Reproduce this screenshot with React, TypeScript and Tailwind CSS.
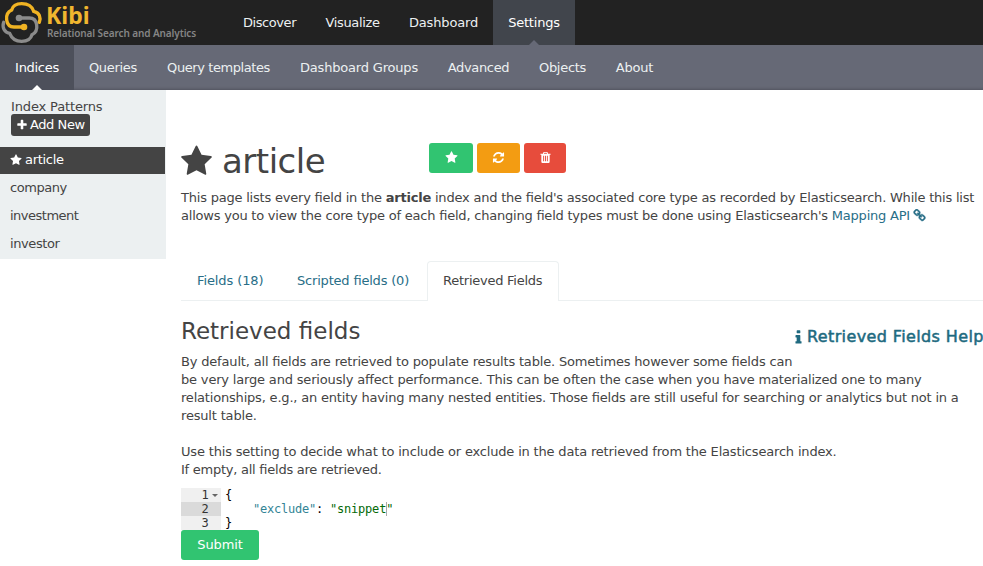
import type { ReactNode } from "react";

const icons = {
  star: "M1728 647q0 22-26 48l-363 354 86 500q1 7 1 20 0 21-10.5 35.5t-30.5 14.5q-19 0-40-12l-449-236-449 236q-22 12-40 12-21 0-31.5-14.5t-10.5-35.5q0-6 2-20l86-500-364-354q-25-27-25-48 0-37 56-46l502-73 225-455q19-41 49-41t49 41l225 455 502 73q56 9 56 46z",
  refresh:
    "M1639 1056q0 5-1 7-64 268-268 434.5t-478 166.5q-146 0-282.5-55t-243.5-157l-129 129q-19 19-45 19t-45-19-19-45v-448q0-26 19-45t45-19h448q26 0 45 19t19 45-19 45l-137 137q71 66 161 102t187 36q134 0 250-65t186-179q11-17 53-117 8-23 30-23h192q13 0 22.5 9.5t9.5 22.5zm25-800v448q0 26-19 45t-45 19h-448q-26 0-45-19t-19-45 19-45l138-138q-148-137-349-137-134 0-250 65t-186 179q-11 17-53 117-8 23-30 23h-199q-13 0-22.5-9.5t-9.5-22.5v-7q65-268 270-434.5t480-166.5q146 0 284 55.5t245 156.5l130-129q19-19 45-19t45 19 19 45z",
  trash:
    "M704 1376v-704q0-14-9-23t-23-9h-64q-14 0-23 9t-9 23v704q0 14 9 23t23 9h64q14 0 23-9t9-23zm256 0v-704q0-14-9-23t-23-9h-64q-14 0-23 9t-9 23v704q0 14 9 23t23 9h64q14 0 23-9t9-23zm256 0v-704q0-14-9-23t-23-9h-64q-14 0-23 9t-9 23v704q0 14 9 23t23 9h64q14 0 23-9t9-23zm-544-992h448l-48-117q-7-9-17-11h-317q-10 2-17 11zm928 32v64q0 14-9 23t-23 9h-96v948q0 83-47 143.5t-113 60.5h-832q-66 0-113-58.5t-47-141.5v-952h-96q-14 0-23-9t-9-23v-64q0-14 9-23t23-9h309l70-167q15-37 54-63t79-26h320q40 0 79 26t54 63l70 167h309q14 0 23 9t9 23z",
  link: "M1520 1216q0-40-28-68l-208-208q-28-28-68-28-42 0-72 32 3 3 19 18.5t21.5 21.5 15 19 13 25.5 3.5 27.5q0 40-28 68t-68 28q-15 0-27.5-3.5t-25.5-13-19-15-21.5-21.5-18.5-19q-33 31-33 73 0 40 28 68l206 207q27 27 68 27 40 0 68-26l147-146q28-28 28-67zm-703-705q0-40-28-68l-206-207q-28-28-68-28-39 0-68 27l-147 146q-28 28-28 67 0 40 28 68l208 208q27 27 68 27 42 0 72-31-3-3-19-18.5t-21.5-21.5-15-19-13-25.5-3.5-27.5q0-40 28-68t68-28q15 0 27.5 3.5t25.5 13 19 15 21.5 21.5 18.5 19q33-31 33-73zm895 705q0 120-85 203l-147 146q-83 83-203 83-121 0-204-85l-206-207q-83-83-83-203 0-123 88-209l-88-88q-86 88-208 88-120 0-204-84l-208-208q-84-84-84-204t85-203l147-146q83-83 203-83 121 0 204 85l206 207q83 83 83 203 0 123-88 209l88 88q86-88 208-88 120 0 204 84l208 208q84 84 84 204z",
  info: "M1216 1344v128q0 26-19 45t-45 19h-512q-26 0-45-19t-19-45v-128q0-26 19-45t45-19h64v-384h-64q-26 0-45-19t-19-45v-128q0-26 19-45t45-19h384q26 0 45 19t19 45v576h64q26 0 45 19t19 45zm-128-1152v192q0 26-19 45t-45 19h-256q-26 0-45-19t-19-45v-192q0-26 19-45t45-19h256q26 0 45 19t19 45z",
  plus: "M1600 736v192q0 40-28 68t-68 28h-416v416q0 40-28 68t-68 28h-192q-40 0-68-28t-28-68v-416h-416q-40 0-68-28t-28-68v-192q0-40 28-68t68-28h416v-416q0-40 28-68t68-28h192q40 0 68 28t28 68v416h416q40 0 68 28t28 68z",
};

function Icon({ name, className }: { name: keyof typeof icons; className: string }) {
  return (
    <svg viewBox="0 0 1792 1792" fill="currentColor" className={"shrink-0 " + className}>
      <path d={icons[name]} />
    </svg>
  );
}

function Logo() {
  return (
    <div className="flex h-[45px] w-[228px] shrink-0">
      <svg viewBox="0 0 132 135" className="h-[45px] w-11 shrink-0" fill="none" strokeWidth="10" strokeLinecap="round">
        <path stroke="#8b8b8b" d="M11 67C6 82 12 96 29 100C35 115 46 124 65 124C84 124 93 116 96 104C108 98 112 88 110 74C108 60 100 54 88 54L57 54" />
        <path stroke="#f0b323" d="M118 67C123 52 119 38 101 34C96 18 86 11 65 11C46 11 38 19 35 30C22 36 18 46 20 60C22 74 30 81 42 81L72 81" />
        <circle cx="57" cy="54" r="10" fill="#8b8b8b" />
        <circle cx="72" cy="81" r="10" fill="#f0b323" />
      </svg>
      <div className="flex flex-col pt-[3px] pl-[2px]">
        <span className="h-6 font-['Noto_Sans',sans-serif] text-[23px] leading-6 font-bold text-[#f0b62f]">Kibi</span>
        <span className="h-3 pl-px font-['Noto_Sans',sans-serif] text-[10px] leading-3 font-semibold tracking-[-0.1px] whitespace-nowrap text-[#858585]">Relational Search and Analytics</span>
      </div>
    </div>
  );
}

function NavItem({ children, w, active, sub }: { children: ReactNode; w: string; active?: boolean; sub?: boolean }) {
  const bg = active ? (sub ? "bg-[#4d505b] text-white" : "bg-[#41454c] text-white") : "text-[#ecf0f1]";
  return (
    <a className={"relative flex h-[45px] shrink-0 items-center justify-center whitespace-nowrap " + w + " " + bg}>
      {children}
      {active && (
        <i
          className={
            "absolute bottom-0 left-1/2 -ml-[5px] h-0 w-0 border-x-[5px] border-b-[5px] border-x-transparent " +
            (sub ? "border-b-white" : "border-b-[#666976]")
          }
        />
      )}
    </a>
  );
}

function CodeLine({ n, children, active, fold }: { n: number; children: ReactNode; active?: boolean; fold?: boolean }) {
  return (
    <div className="flex h-[14px] leading-[14px] whitespace-pre">
      <span className={"flex w-10 shrink-0 items-center text-[#333] " + (active ? "bg-[#dadada]" : "bg-[#f0f0f0]")}>
        <span className="w-[27.5px] text-right">{n}</span>
        {fold && <i className="ml-[3px] h-0 w-0 border-x-[3px] border-t-[3px] border-x-transparent border-t-[#666]" />}
      </span>
      <span className="pl-1">{children}</span>
    </div>
  );
}

export default function App() {
  return (
    <div className="h-[566px] w-[983px] overflow-hidden bg-white font-['DejaVu_Sans',sans-serif] text-[13px] leading-[18px] text-[#444] [font-feature-settings:'liga']">
      <header className="flex h-[45px] bg-[#222]">
        <Logo />
        <NavItem w="w-[83px] tracking-[-0.42px]">Discover</NavItem>
        <NavItem w="w-[83px] tracking-[-0.35px]">Visualize</NavItem>
        <NavItem w="w-[99px] tracking-[-0.15px]">Dashboard</NavItem>
        <NavItem w="w-[82px] tracking-[-0.2px]" active>Settings</NavItem>
      </header>
      <nav className="flex h-[45px] bg-[#666976] shadow-[inset_0_-3px_3px_-2px_#51535f]">
        <NavItem w="w-[74px] tracking-[-0.3px]" active sub>Indices</NavItem>
        <NavItem w="w-[78px] tracking-[-0.3px]" sub>Queries</NavItem>
        <NavItem w="w-[133px] tracking-[-0.42px]" sub>Query templates</NavItem>
        <NavItem w="w-[148px] tracking-[-0.19px]" sub>Dashboard Groups</NavItem>
        <NavItem w="w-[91px] tracking-[-0.35px]" sub>Advanced</NavItem>
        <NavItem w="w-[77px] tracking-[-0.3px]" sub>Objects</NavItem>
        <NavItem w="w-[67px] tracking-[-0.2px]" sub>About</NavItem>
      </nav>
      <div className="flex items-start">
        <aside className="h-[169px] w-[166px] shrink-0 bg-[#ecf0f1]">
          <div className="h-[57px] pt-2 pl-[11px]">
            <div className="h-4 leading-[18px] tracking-[-0.14px]">Index Patterns</div>
            <button className="flex h-[22px] w-[79px] items-center rounded-[3px] bg-[#444] pl-[4.5px] tracking-[-0.42px] whitespace-nowrap text-white">
              <Icon name="plus" className="mr-[2.5px] size-[12px]" />
              Add New
            </button>
          </div>
          <div className="flex h-[27px] w-[165px] items-center bg-[#444] pb-px pl-[9.5px] tracking-[-0.3px] text-white">
            <Icon name="star" className="mr-[3.5px] size-[12px]" />
            article
          </div>
          <div className="flex h-7 items-center pl-[10px] tracking-[-0.45px]">company</div>
          <div className="flex h-7 items-center pl-[10px] tracking-[-0.5px]">investment</div>
          <div className="flex h-7 items-center pl-[10px] tracking-[-0.4px]">investor</div>
        </aside>
        <main className="min-w-0 flex-1 pl-[15px]">
          <div className="flex h-[99px] pt-[53px]">
            <h1 className="flex h-9 w-[248px] items-center text-[34px] leading-9 tracking-[-0.5px]">
              <Icon name="star" className="-ml-px mr-[9px] size-[33px]" />
              article
            </h1>
            <div className="flex gap-1 text-white">
              <button className="flex h-[30px] w-11 items-center justify-center rounded-[3px] bg-[#31c471] pb-px"><Icon name="star" className="size-[13px]" /></button>
              <button className="flex h-[30px] w-[43px] items-center justify-center rounded-[3px] bg-[#f39c12] pb-px"><Icon name="refresh" className="size-[13px]" /></button>
              <button className="flex h-[30px] w-[42px] items-center justify-center rounded-[3px] bg-[#e74c3c] pb-px"><Icon name="trash" className="size-[13px]" /></button>
            </div>
          </div>
          <p className="h-9 whitespace-nowrap">
            <span className="tracking-[-0.21px]">
              This page lists every field in the <b>article</b> index and the field's associated core type as recorded by Elasticsearch. While this list
            </span>
            <br />
            <span className="tracking-[-0.215px]">
              allows you to view the core type of each field, changing field types must be done using Elasticsearch's{" "}
              <a className="text-[#286e87]">Mapping API <Icon name="link" className="-ml-px inline size-[13px] stroke-[#286e87] stroke-[60] align-[-2px]" /></a>
            </span>
          </p>
          <div className="mt-9 flex h-10 border-b border-[#ecf0f1] text-[#286e87]">
            <a className="flex w-[100px] items-center pl-4 tracking-[-0.1px] whitespace-nowrap">Fields (18)</a>
            <a className="flex w-[146px] items-center pl-4 tracking-[-0.19px] whitespace-nowrap">Scripted fields (0)</a>
            <a className="flex h-10 w-[132px] items-center rounded-t-[4px] border border-b-0 border-[#ecf0f1] bg-white pb-[2px] pl-[15px] tracking-[-0.25px] whitespace-nowrap text-[#444]">Retrieved Fields</a>
          </div>
          <div className="flex h-[52px] justify-between pt-[18px] whitespace-nowrap">
            <h2 className="text-[23px] leading-6">Retrieved fields</h2>
            <a className="flex h-9 w-[189px] items-center text-[16px] tracking-[0.38px] text-[#206a80] [-webkit-text-stroke:0.5px_#206a80]">
              <Icon name="info" className="-ml-[4px] size-[17px]" />
              Retrieved Fields Help
            </a>
          </div>
          <div className="h-[126px] tracking-[-0.175px] whitespace-nowrap">
            By default, all fields are retrieved to populate results table. Sometimes however some fields can
            <br />
            be very large and seriously affect performance. This can be often the case when you have materialized one to many
            <br />
            <span className="tracking-[-0.192px]">
              relationships, e.g., an entity having many nested entities. Those fields are still useful for searching or analytics but not in a
            </span>
            <br />
            result table.
            <br />
            <br />
            Use this setting to decide what to include or exclude in the data retrieved from the Elasticsearch index.
            <br />
            <span className="tracking-[-0.25px]">If empty, all fields are retrieved.</span>
          </div>
          <div className="mt-[9px] h-[42px] font-['DejaVu_Sans_Mono',monospace] text-[12px] tracking-[-0.22px] text-black">
            <CodeLine n={1} fold>{"{"}</CodeLine>
            <CodeLine n={2} active>
              {"    "}
              <span className="text-[#318495]">"exclude"</span>
              {": "}
              <span className="text-[#036a07]">"snippet<span className="-mr-px inline-block h-[14px] w-px bg-[#aaa] align-top" />"</span>
            </CodeLine>
            <CodeLine n={3}>{"}"}</CodeLine>
          </div>
          <button className="flex h-[30px] w-[78px] items-center justify-center rounded-[3px] bg-[#31c471] tracking-[-0.1px] text-white">Submit</button>
        </main>
      </div>
    </div>
  );
}
